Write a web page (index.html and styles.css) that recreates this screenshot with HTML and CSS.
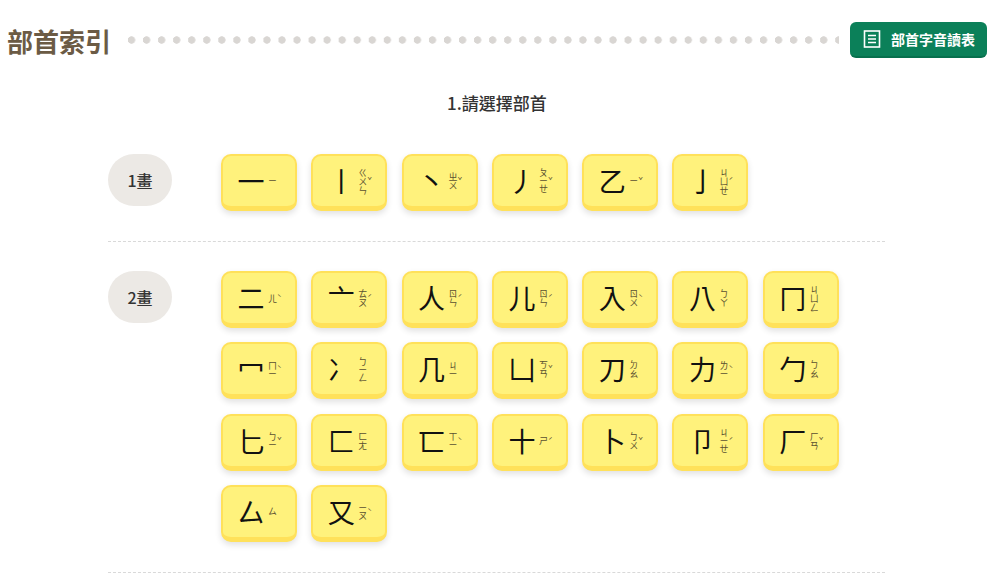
FILE: index.html
```html
<!DOCTYPE html>
<html lang="zh-Hant">
<head>
  <meta charset="UTF-8">
  <meta name="viewport" content="width=device-width, initial-scale=1">
  <title>部首索引</title>
  <link rel="stylesheet" href="styles.css">
</head>
<body>

  <header class="page-head">
    <h1 class="page-title">部首索引</h1>
    <div class="dots"></div>
    <a class="table-btn" href="#">
      <svg class="table-icon" viewBox="0 0 18 18" width="18" height="18" aria-hidden="true">
        <rect x="1.5" y="1" width="15" height="16" fill="none" stroke="#fff" stroke-width="1.6"/>
        <path d="M5 5.5h8M5 9h8M5 12.5h8" fill="none" stroke="#fff" stroke-width="1.6"/>
      </svg>
      部首字音讀表
    </a>
  </header>

  <h2 class="step">1.請選擇部首</h2>

  <main class="index">
    <section class="stroke-row">
      <div class="stroke-pill">1畫</div>
      <div class="radicals">
        <button class="radical"><span class="glyph">一</span><span class="sound"><span class="zy">ㄧ</span></span></button>
        <button class="radical"><span class="glyph">丨</span><span class="sound"><span class="zy">ㄍㄨㄣ</span><span class="tone">ˇ</span></span></button>
        <button class="radical"><span class="glyph">丶</span><span class="sound"><span class="zy">ㄓㄨ</span><span class="tone">ˇ</span></span></button>
        <button class="radical"><span class="glyph">丿</span><span class="sound"><span class="zy">ㄆㄧㄝ</span><span class="tone">ˇ</span></span></button>
        <button class="radical"><span class="glyph">乙</span><span class="sound"><span class="zy">ㄧ</span><span class="tone">ˇ</span></span></button>
        <button class="radical"><span class="glyph">亅</span><span class="sound"><span class="zy">ㄐㄩㄝ</span><span class="tone">ˊ</span></span></button>
      </div>
    </section>

    <section class="stroke-row">
      <div class="stroke-pill">2畫</div>
      <div class="radicals">
        <button class="radical"><span class="glyph">二</span><span class="sound"><span class="zy">ㄦ</span><span class="tone">ˋ</span></span></button>
        <button class="radical"><span class="glyph">亠</span><span class="sound"><span class="zy">ㄊㄡ</span><span class="tone">ˊ</span></span></button>
        <button class="radical"><span class="glyph">人</span><span class="sound"><span class="zy">ㄖㄣ</span><span class="tone">ˊ</span></span></button>
        <button class="radical"><span class="glyph">儿</span><span class="sound"><span class="zy">ㄖㄣ</span><span class="tone">ˊ</span></span></button>
        <button class="radical"><span class="glyph">入</span><span class="sound"><span class="zy">ㄖㄨ</span><span class="tone">ˋ</span></span></button>
        <button class="radical"><span class="glyph">八</span><span class="sound"><span class="zy">ㄅㄚ</span></span></button>
        <button class="radical"><span class="glyph">冂</span><span class="sound"><span class="zy">ㄐㄩㄥ</span></span></button>

        <button class="radical"><span class="glyph">冖</span><span class="sound"><span class="zy">ㄇㄧ</span><span class="tone">ˋ</span></span></button>
        <button class="radical"><span class="glyph">冫</span><span class="sound"><span class="zy">ㄅㄧㄥ</span></span></button>
        <button class="radical"><span class="glyph">几</span><span class="sound"><span class="zy">ㄐㄧ</span></span></button>
        <button class="radical"><span class="glyph">凵</span><span class="sound"><span class="zy">ㄎㄢ</span><span class="tone">ˇ</span></span></button>
        <button class="radical"><span class="glyph">刀</span><span class="sound"><span class="zy">ㄉㄠ</span></span></button>
        <button class="radical"><span class="glyph">力</span><span class="sound"><span class="zy">ㄌㄧ</span><span class="tone">ˋ</span></span></button>
        <button class="radical"><span class="glyph">勹</span><span class="sound"><span class="zy">ㄅㄠ</span></span></button>

        <button class="radical"><span class="glyph">匕</span><span class="sound"><span class="zy">ㄅㄧ</span><span class="tone">ˇ</span></span></button>
        <button class="radical"><span class="glyph">匚</span><span class="sound"><span class="zy">ㄈㄤ</span></span></button>
        <button class="radical"><span class="glyph">匸</span><span class="sound"><span class="zy">ㄒㄧ</span><span class="tone">ˋ</span></span></button>
        <button class="radical"><span class="glyph">十</span><span class="sound"><span class="zy">ㄕ</span><span class="tone">ˊ</span></span></button>
        <button class="radical"><span class="glyph">卜</span><span class="sound"><span class="zy">ㄅㄨ</span><span class="tone">ˇ</span></span></button>
        <button class="radical"><span class="glyph">卩</span><span class="sound"><span class="zy">ㄐㄧㄝ</span><span class="tone">ˊ</span></span></button>
        <button class="radical"><span class="glyph">厂</span><span class="sound"><span class="zy">ㄏㄢ</span><span class="tone">ˇ</span></span></button>

        <button class="radical"><span class="glyph">厶</span><span class="sound"><span class="zy">ㄙ</span></span></button>
        <button class="radical"><span class="glyph">又</span><span class="sound"><span class="zy">ㄧㄡ</span><span class="tone">ˋ</span></span></button>
      </div>
    </section>
  </main>

</body>
</html>
```

FILE: styles.css
```css
body {
  margin: 0;
  background: #fff;
  color: #333;
  font-family: "Noto Sans CJK TC", "Noto Sans", sans-serif;
}

.page-head {
  display: flex;
  align-items: center;
  padding: 22px 13px 0 7px;
}

.page-title {
  margin: 1px 0 -1px;
  font-size: 26px;
  line-height: 36px;
  font-weight: 700;
  color: #6b5b45;
}

.dots {
  flex: 1;
  height: 8px;
  margin: 0 11px 0 17px;
  background: radial-gradient(circle at 3.5px 4px, #d9d6d3 3.4px, transparent 4px) 0 0 / 15.05px 8px repeat-x;
}

.table-btn {
  display: flex;
  align-items: center;
  gap: 10px;
  height: 36px;
  box-sizing: border-box;
  padding: 0 12px 0 13px;
  background: #0b8059;
  border-bottom: 2px solid #07704d;
  border-radius: 6px;
  color: #fff;
  font-size: 14px;
  font-weight: 700;
  text-decoration: none;
}

.step {
  margin: 33px 6px 0 0;
  font-size: 17px;
  line-height: 24px;
  font-weight: 500;
  text-align: center;
  color: #333;
}

.index {
  width: 777px;
  margin: 0 0 0 108px;
  padding-top: 39px;
}

.stroke-row {
  display: flex;
  align-items: flex-start;
  padding-bottom: 30px;
  margin-bottom: 30px;
  border-bottom: 1px dashed #d9d9d9;
}

.stroke-row:first-child {
  margin-bottom: 29px;
}

.stroke-pill {
  width: 64px;
  height: 52px;
  margin: 0 49px 0 0;
  flex: none;
  display: flex;
  align-items: center;
  justify-content: center;
  border-radius: 26px;
  background: #ece9e5;
  font-size: 16px;
  font-weight: 500;
  color: #333;
}

.radicals {
  display: grid;
  grid-template-columns: repeat(7, 76px);
  gap: 14.3px 14.3px;
}

.radical {
  height: 57px;
  padding: 0;
  display: flex;
  align-items: center;
  justify-content: center;
  gap: 3px;
  background: #fff27c;
  border: 2px solid #ffe15a;
  border-bottom-width: 5px;
  border-radius: 10px;
  box-shadow: 0 3px 6px rgba(0, 0, 0, 0.12);
  color: #111;
  font-family: inherit;
  cursor: pointer;
}

.glyph {
  width: 28px;
  font-size: 27px;
  line-height: 32px;
  text-align: center;
}

.sound {
  width: 13px;
  display: flex;
  align-items: center;
  color: #5a5030;
}

.zy {
  writing-mode: vertical-rl;
  font-size: 9px;
  line-height: 9px;
}

.tone {
  font-size: 8px;
  line-height: 8px;
}
```
